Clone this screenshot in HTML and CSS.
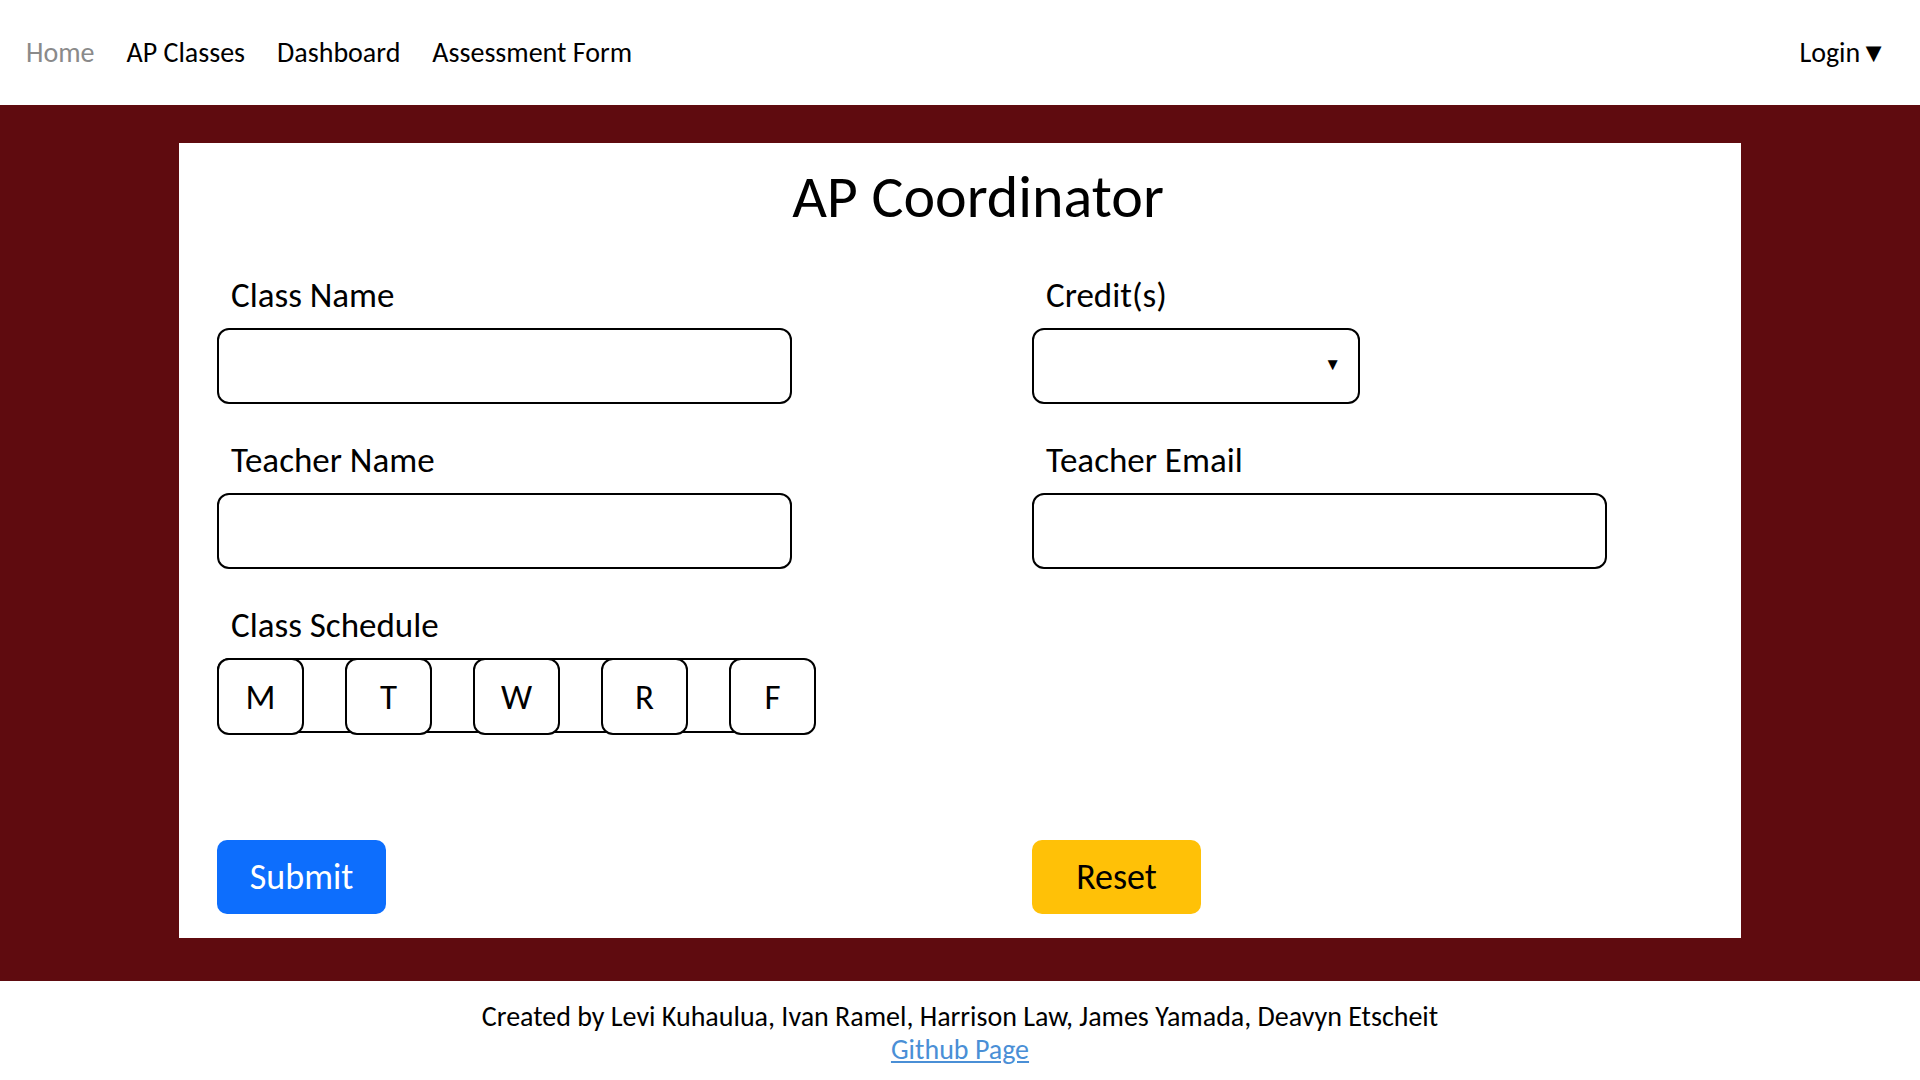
FILE: index.html
```html
<!DOCTYPE html>
<html lang="en">
<head>
<meta charset="utf-8">
<title>AP Coordinator</title>
<link rel="stylesheet" href="styles.css">
</head>
<body>
<nav class="navbar">
  <div class="nav-left">
    <a class="nav-link muted" href="#">Home</a>
    <a class="nav-link" href="#">AP Classes</a>
    <a class="nav-link" href="#">Dashboard</a>
    <a class="nav-link" href="#">Assessment Form</a>
  </div>
  <div class="nav-right">
    <a class="nav-link" href="#">Login<span class="caret">▼</span></a>
  </div>
</nav>
<main class="hero">
  <section class="card">
    <h1 class="title">AP Coordinator</h1>
    <form class="form-grid">
      <div class="field">
        <label class="label">Class Name</label>
        <input class="input wide" type="text">
      </div>
      <div class="field">
        <label class="label">Credit(s)</label>
        <div class="select"><span class="select-arrow">▼</span></div>
      </div>
      <div class="field">
        <label class="label">Teacher Name</label>
        <input class="input wide" type="text">
      </div>
      <div class="field">
        <label class="label">Teacher Email</label>
        <input class="input wide" type="text">
      </div>
      <div class="field">
        <label class="label">Class Schedule</label>
        <div class="days">
          <span class="day">M</span>
          <span class="day">T</span>
          <span class="day">W</span>
          <span class="day">R</span>
          <span class="day">F</span>
        </div>
      </div>
      <div class="field"></div>
      <div class="actions"><button type="button" class="btn btn-primary">Submit</button></div>
      <div class="actions"><button type="button" class="btn btn-warning">Reset</button></div>
    </form>
  </section>
</main>
<footer class="footer">
  <div>Created by Levi Kuhaulua, Ivan Ramel, Harrison Law, James Yamada, Deavyn Etscheit</div>
  <a class="gh" href="#">Github Page</a>
</footer>
</body>
</html>
```
FILE: styles.css
```css
* { box-sizing: border-box; }
html, body { margin: 0; padding: 0; }
body {
  font-family: "Carlito", "Lato", "Liberation Sans", sans-serif;
  color: #000;
  background: #fff;
}
.navbar {
  height: 105px;
  display: flex;
  align-items: center;
  justify-content: space-between;
  padding: 0 33px 0 26px;
}
.nav-left { display: flex; gap: 32px; }
.nav-link {
  color: #000;
  text-decoration: none;
  font-size: 28px;
  line-height: 32px;
}
.nav-link.muted { color: #8a8a8a; }
.caret { font-size: 27px; margin-left: 0; }
.hero {
  background: #5f0b0f;
  padding: 38px 179px 43px;
}
.card {
  background: #fff;
  padding: 20px 38px 24px;
}
.title {
  margin: 0;
  padding-left: 36px;
  text-align: center;
  font-weight: 400;
  font-size: 60px;
  line-height: 67px;
}
.form-grid {
  margin-top: 48px;
  display: grid;
  grid-template-columns: 815px 1fr;
  row-gap: 39px;
}
.field { display: flex; flex-direction: column; align-items: flex-start; }
.label {
  display: block;
  padding-left: 14px;
  font-size: 35px;
  line-height: 34px;
  margin-bottom: 16px;
}
.input {
  width: 575px;
  height: 76px;
  border: 2px solid #000;
  border-radius: 12px;
  background: #fff;
  font: inherit;
  padding: 0 12px;
}
.select {
  position: relative;
  width: 328px;
  height: 76px;
  border: 2px solid #000;
  border-radius: 12px;
}
.select-arrow {
  position: absolute;
  right: 17px;
  top: 25px;
  font-size: 17px;
  line-height: 20px;
}
.days {
  width: 574px;
  height: 75px;
  border: 2px solid #000;
  border-radius: 12px;
  display: flex;
  gap: 41px;
  overflow: visible;
}
.day {
  flex: none;
  width: 87px;
  height: 77px;
  margin: -2px 0 0 -2px;
  border: 2px solid #000;
  border-radius: 12px;
  background: #fff;
  display: flex;
  align-items: center;
  justify-content: center;
  font-size: 35px;
}
.day + .day { margin-left: 0; }
.actions { margin-top: 68px; }
.btn {
  width: 169px;
  height: 74px;
  border: none;
  border-radius: 10px;
  font-family: inherit;
  font-size: 36px;
  cursor: pointer;
}
.btn-primary { background: #0d6efd; color: #fff; }
.btn-warning { background: #ffc107; color: #000; }
.footer {
  height: 100px;
  padding-top: 19px;
  text-align: center;
  font-size: 28px;
  line-height: 33px;
}
.gh { color: #4a8fd6; text-decoration: underline; }
```
